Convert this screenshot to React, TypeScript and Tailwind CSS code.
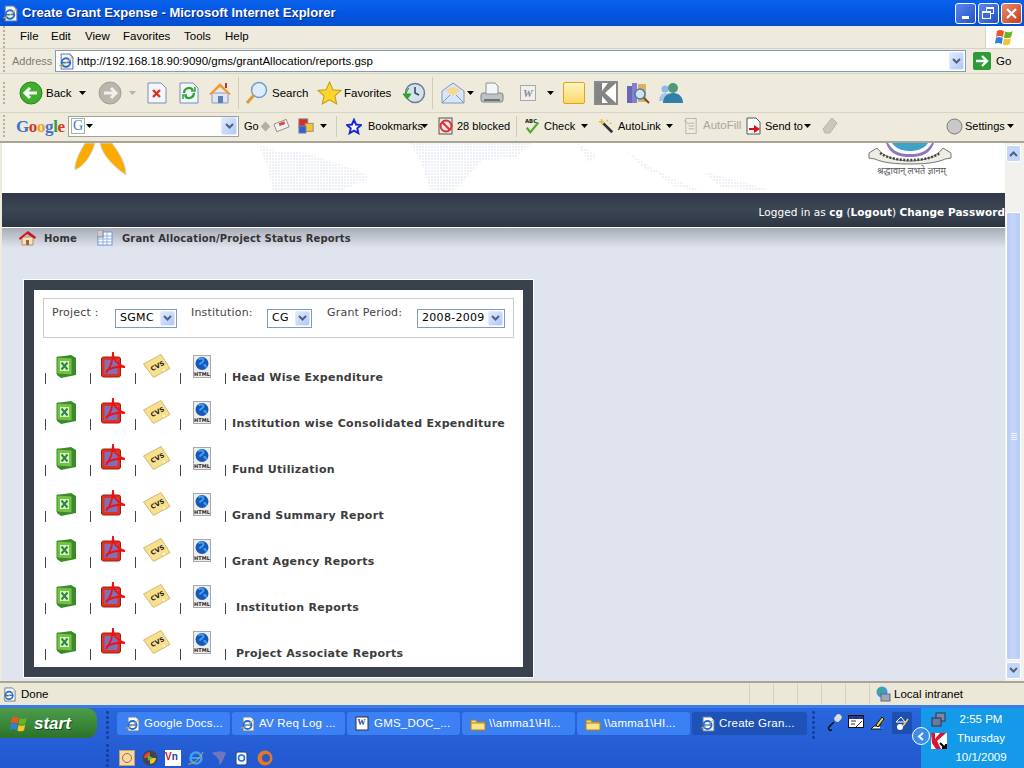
import { ReactNode } from "react";

const reports = [
  { name: "Head Wise Expenditure", gap: "ml-[6px]" },
  { name: "Institution wise Consolidated Expenditure", gap: "ml-[6px]" },
  { name: "Fund Utilization", gap: "ml-[6px]" },
  { name: "Grand Summary Report", gap: "ml-[6px]" },
  { name: "Grant Agency Reports", gap: "ml-[6px]" },
  { name: "Institution Reports", gap: "ml-[10px]" },
  { name: "Project Associate Reports", gap: "ml-[10px]" },
];

const Caret = ({ className = "" }: { className?: string }) => (
  <svg width="7" height="4" viewBox="0 0 7 4" className={`shrink-0 ${className}`}>
    <path d="M0 0h7L3.5 4z" fill="#000" />
  </svg>
);

const Chevron = ({ color = "#4d6185" }: { color?: string }) => (
  <svg width="9" height="7" viewBox="0 0 9 7">
    <path d="M1 1l3.5 3.5L8 1" fill="none" stroke={color} strokeWidth="2" />
  </svg>
);

const ComboArrow = ({ className = "" }: { className?: string }) => (
  <div className={`flex items-center justify-center rounded-[2px] border border-[#e3ebfb] bg-gradient-to-br from-[#e1eafe] to-[#aec8f7] ${className}`}>
    <Chevron />
  </div>
);

const Grip = () => (
  <div className="mx-[3px] flex h-full shrink-0 flex-col justify-center gap-[2px]">
    {[0, 1, 2, 3, 4, 5].map((i) => (
      <div key={i} className="h-[2px] w-[2px] bg-[#b5b19f]" />
    ))}
  </div>
);

const TaskGrip = () => (
  <div className="flex shrink-0 flex-col gap-[2px]">
    {[0, 1, 2, 3, 4, 5].map((i) => (
      <div key={i} className="h-[3px] w-[3px] rounded-[1px] bg-[#16409c]" />
    ))}
  </div>
);

const IePage = ({ size = 16 }: { size?: number }) => (
  <svg width={size} height={size} viewBox="0 0 16 16" className="shrink-0">
    <path d="M3 1h8l3 3v11H3z" fill="#f4f7fd" stroke="#6a7c99" />
    <circle cx="7.5" cy="9" r="4" fill="none" stroke="#1f6fd6" strokeWidth="1.8" />
    <path d="M4 9h7" stroke="#1f6fd6" strokeWidth="1.3" />
    <path d="M1 12c3 0 9-4 12-8" fill="none" stroke="#e0a83a" strokeWidth="1" />
  </svg>
);

const WinFlag = ({ size = 20 }: { size?: number }) => (
  <svg width={size} height={size} viewBox="0 0 20 20" className="shrink-0">
    <path d="M2 4c2-1.500 4-1.500 7 0l-1 6c-3-1.500-5-1.500-7 0z" fill="#e8562a" />
    <path d="M10 4.500c3 1.200 5 1 7.500-.5l-1.300 6c-2.500 1.500-4.500 1.700-7.200.5z" fill="#6ab42d" />
    <path d="M1 11c2-1.500 4-1.500 6.800 0l-1 6c-3-1.500-5-1.500-7 0z" fill="#2f7fe0" />
    <path d="M9 11.500c3 1.200 5 1 7-.5l-1.200 6c-2.500 1.500-4.500 1.700-7 .5z" fill="#f7c52b" />
  </svg>
);

function Excel() {
  return (
    <svg width="20" height="23" viewBox="0 0 20 23" className="block">
      <path d="M1 2l14-2 5 3v17l-15 3-4-3z" fill="#3a8a2c" />
      <path d="M1 2l15 1v17L1 19z" fill="#74c244" stroke="#3c8a2a" />
      <rect x="4" y="6" width="9" height="10" fill="#dcefc8" />
      <path d="M5.500 7.500l6 7M11.500 7.500l-6 7" stroke="#2a8a3c" strokeWidth="2" />
    </svg>
  );
}

function Pdf() {
  return (
    <svg width="24" height="26" viewBox="0 0 24 26" className="block">
      <rect x="0.500" y="5" width="19" height="20" rx="2" fill="#e1301f" stroke="#9c1f15" />
      <rect x="3.500" y="8" width="13" height="14" fill="#8070b8" />
      <path d="M12 0c0 9-3 16-7 21M12 0c0 8 3 11 12 15M5 19c5-3 11-5 19-4" fill="none" stroke="#ee1111" strokeWidth="1.800" />
    </svg>
  );
}

function Csv() {
  return (
    <svg width="28" height="24" viewBox="0 0 28 24" className="block">
      <path d="M0.500 10L18 0.500l9 14-16.500 9z" fill="#f8e08f" stroke="#cfb96f" />
      <text x="7.500" y="15" fontSize="6.500" fontWeight="700" fontFamily="'DejaVu Sans', sans-serif" fill="#222" transform="rotate(-27 13 13)">CVS</text>
      <circle cx="21" cy="16" r="1" fill="#fff" />
    </svg>
  );
}

function Html() {
  return (
    <svg width="18" height="23" viewBox="0 0 18 23" className="block">
      <rect x="0.500" y="0.500" width="17" height="22" fill="#eeeeee" stroke="#a8a8a8" />
      <circle cx="9" cy="8.500" r="6.500" fill="#1657b8" />
      <path d="M5.500 4.500c2-2 5-1 5 1s-3 2-4 4M10.500 10.500c2-1 3 0 2 2" fill="none" stroke="#3fa0ee" strokeWidth="2" />
      <text x="9" y="20.500" textAnchor="middle" fontSize="5" fontWeight="700" fontFamily="'DejaVu Sans', sans-serif" fill="#222">HTML</text>
    </svg>
  );
}

const IconCell = ({ children, width, pad }: { children: ReactNode; width: string; pad: string }) => (
  <div className={`flex items-end ${width}`}>
    <span className="mb-[1px] h-[11px] w-[1px] shrink-0 bg-[#444]" />
    <div className={`${pad} mb-[7px]`}>{children}</div>
  </div>
);

function ReportRow({ name, gap }: { name: string; gap: string }) {
  return (
    <div className="flex h-[46px] items-end pl-[2px]">
      <IconCell width="w-[45px]" pad="ml-[10px]"><Excel /></IconCell>
      <IconCell width="w-[45px]" pad="ml-[10px]"><Pdf /></IconCell>
      <IconCell width="w-[45px]" pad="ml-[7px]"><Csv /></IconCell>
      <IconCell width="w-[45px]" pad="ml-[12px]"><Html /></IconCell>
      <span className="mb-[1px] h-[11px] w-[1px] bg-[#444]" />
      <span className={`${gap} whitespace-nowrap text-[11px] font-bold leading-[14px] tracking-[0.3px] text-[#3c3c3c]`}>{name}</span>
    </div>
  );
}

const Select = ({ value, width, className = "" }: { value: string; width: string; className?: string }) => (
  <div className={`flex h-[19px] shrink-0 items-center justify-between border border-[#7f9db9] bg-white pl-[4px] pr-[1px] text-[11px] tracking-[0.3px] text-black ${width} ${className}`}>
    <span>{value}</span>
    <ComboArrow className="h-[15px] w-[15px]" />
  </div>
);

function ToolbarLabel({ children, className = "" }: { children: ReactNode; className?: string }) {
  return <span className={`shrink-0 whitespace-nowrap text-[11.5px] leading-none text-black ${className}`}>{children}</span>;
}

function BrowserChrome() {
  return (
    <>
      <div className="flex h-[26px] items-center bg-gradient-to-b from-[#0a62ea] via-[#0455e2] to-[#0250cf] pl-[2px] pr-[2px]">
        <IePage size={17} />
        <span className="ml-[3px] text-[13px] font-bold text-white [text-shadow:1px_1px_#0a2a80]">Create Grant Expense - Microsoft Internet Explorer</span>
        <div className="ml-auto flex gap-[2px]">
          <div className="flex h-[21px] w-[21px] items-end justify-center rounded-[3px] border border-white bg-gradient-to-br from-[#5c86ec] to-[#2450c8] pb-[4px]">
            <div className="h-[3px] w-[7px] bg-white" />
          </div>
          <div className="relative h-[21px] w-[21px] rounded-[3px] border border-white bg-gradient-to-br from-[#5c86ec] to-[#2450c8]">
            <div className="absolute left-[7px] top-[3px] h-[7px] w-[8px] border border-t-2 border-white" />
            <div className="absolute left-[3px] top-[7px] h-[8px] w-[9px] border border-t-2 border-white bg-[#3e69d9]" />
          </div>
          <div className="flex h-[21px] w-[21px] items-center justify-center rounded-[3px] border border-white bg-gradient-to-br from-[#e8896a] to-[#c43c16]">
            <svg width="11" height="11" viewBox="0 0 11 11"><path d="M1 1l9 9M10 1l-9 9" stroke="#fff" strokeWidth="2.200" /></svg>
          </div>
        </div>
      </div>

      <div className="flex h-[23px] items-center border-b border-[#d8d4c4] bg-[#eeebdd]">
        <Grip />
        <div className="ml-[12px] flex text-[11.5px] text-black">
          <span className="w-[31px]">File</span>
          <span className="w-[34px]">Edit</span>
          <span className="w-[38px]">View</span>
          <span className="w-[61px]">Favorites</span>
          <span className="w-[41px]">Tools</span>
          <span>Help</span>
        </div>
        <div className="ml-auto flex h-full w-[39px] items-center justify-center border-l border-[#d8d4c4] bg-white">
          <WinFlag />
        </div>
      </div>

      <div className="flex h-[25px] items-center border-b border-[#d8d4c4] bg-[#eeebdd]">
        <Grip />
        <span className="ml-[4px] mt-[1px] w-[39px] text-[11px] text-[#807d70]">Address</span>
        <div className="ml-[4px] flex h-[22px] w-[911px] items-center border border-[#7f9db9] bg-white pl-[2px] pr-[1px]">
          <IePage size={17} />
          <span className="ml-[2px] mt-[1px] text-[11.5px] text-black">http://192.168.18.90:9090/gms/grantAllocation/reports.gsp</span>
          <ComboArrow className="ml-auto h-[18px] w-[15px]" />
        </div>
        <div className="ml-[7px] flex h-[18px] w-[18px] items-center justify-center rounded-[2px] bg-[#2c9a35]">
          <svg width="14" height="12" viewBox="0 0 14 12"><path d="M1 6h11M7 1l5 5-5 5" fill="none" stroke="#fff" strokeWidth="2.400" /></svg>
        </div>
        <ToolbarLabel className="ml-[5px] mt-[1px]">Go</ToolbarLabel>
      </div>

      <div className="flex h-[39px] items-center border-b border-[#d8d4c4] bg-[#eeebdd]">
        <Grip />
        <svg width="24" height="24" viewBox="0 0 24 24" className="ml-[11px] shrink-0">
          <circle cx="12" cy="12" r="11" fill="#3fae2a" stroke="#2a8420" />
          <path d="M18 12H7M11 7l-5 5 5 5" fill="none" stroke="#fff" strokeWidth="3" />
        </svg>
        <ToolbarLabel className="ml-[3px] mt-[1px] w-[24px]">Back</ToolbarLabel>
        <Caret className="ml-[9px]" />
        <svg width="24" height="24" viewBox="0 0 24 24" className="ml-[12px] shrink-0">
          <circle cx="12" cy="12" r="11" fill="#b8b6ad" stroke="#a09e95" />
          <path d="M6 12h11M13 7l5 5-5 5" fill="none" stroke="#f2f1ea" strokeWidth="3" />
        </svg>
        <svg width="7" height="4" viewBox="0 0 7 4" className="ml-[7px] shrink-0"><path d="M0 0h7L3.500 4z" fill="#b5b3a8" /></svg>
        <svg width="20" height="22" viewBox="0 0 20 22" className="ml-[11px] shrink-0">
          <path d="M1 1h13l5 5v15H1z" fill="#f3f6fd" stroke="#7a8db5" />
          <path d="M6 8l7 7M13 8l-7 7" stroke="#e0301a" strokeWidth="2.400" />
        </svg>
        <svg width="20" height="22" viewBox="0 0 20 22" className="ml-[12px] shrink-0">
          <path d="M1 1h13l5 5v15H1z" fill="#f3f6fd" stroke="#7a8db5" />
          <path d="M5 11a5 5 0 0 1 9-3M15 11a5 5 0 0 1-9 3" fill="none" stroke="#2aa32f" strokeWidth="2.200" />
          <path d="M12 9h4V5M8 13H4v4" fill="none" stroke="#2aa32f" strokeWidth="1.500" />
        </svg>
        <svg width="24" height="24" viewBox="0 0 24 24" className="ml-[9px] shrink-0">
          <path d="M4 12v10h16V12z" fill="#dfe6f2" stroke="#8c9ab5" />
          <path d="M1 13L12 2l11 11-2 1-9-8-9 8z" fill="#f09a3c" />
          <rect x="10" y="15" width="5" height="7" fill="#5b7fb8" />
          <rect x="17" y="2" width="2" height="5" fill="#c0392b" />
        </svg>
        <div className="ml-[6px] h-[32px] w-[1px] shrink-0 bg-[#cfcbb9]" />
        <svg width="24" height="24" viewBox="0 0 24 24" className="ml-[6px] shrink-0">
          <circle cx="14" cy="9" r="7.500" fill="#dcecfb" stroke="#6f9fd0" strokeWidth="1.500" />
          <path d="M9 14L2 22" stroke="#d89a3b" strokeWidth="3" />
        </svg>
        <ToolbarLabel className="ml-[3px] mt-[1px] w-[34px]">Search</ToolbarLabel>
        <svg width="25" height="25" viewBox="0 0 24 24" className="ml-[11px] shrink-0">
          <path d="M12 1l3.300 7.300 7.700.8-5.800 5.200 1.700 7.700L12 18l-6.900 4 1.700-7.700L1 9.100l7.700-.8z" fill="#fcd62c" stroke="#c79a14" />
        </svg>
        <ToolbarLabel className="ml-[2px] mt-[1px] w-[47px]">Favorites</ToolbarLabel>
        <svg width="24" height="24" viewBox="0 0 24 24" className="ml-[11px] shrink-0">
          <circle cx="13" cy="12" r="9.500" fill="#d5e2ee" stroke="#6b7d90" strokeWidth="1.500" />
          <path d="M13 6v6l4 2" stroke="#345" strokeWidth="1.500" fill="none" />
          <path d="M1 13h8l-4 5zM4 13a9 9 0 0 1 3-6" fill="#2fa02c" stroke="#2fa02c" />
        </svg>
        <div className="ml-[6px] h-[32px] w-[1px] shrink-0 bg-[#cfcbb9]" />
        <svg width="24" height="22" viewBox="0 0 24 22" className="ml-[8px] shrink-0">
          <path d="M1 9l11-8 11 8v12H1z" fill="#d9e5f8" stroke="#7e95c6" />
          <path d="M5 9c3-5 11-5 14 0l-7 5z" fill="#f6d88e" />
          <path d="M1 21l8-8M23 21l-8-8" stroke="#7e95c6" />
        </svg>
        <Caret className="ml-[2px]" />
        <svg width="24" height="24" viewBox="0 0 24 24" className="ml-[6px] shrink-0">
          <rect x="1" y="12" width="22" height="9" rx="2" fill="#bfc3c6" stroke="#7d8286" />
          <path d="M6 2h9l3 3v8H6z" fill="#f4f6f8" stroke="#8a8f93" />
          <rect x="4" y="18" width="16" height="2" fill="#6d7276" />
        </svg>
        <svg width="20" height="20" viewBox="0 0 20 20" className="ml-[14px] shrink-0">
          <rect x="2.500" y="2.500" width="15" height="15" fill="#efefef" stroke="#a9a9a9" />
          <text x="10" y="14" textAnchor="middle" fontSize="11" fontStyle="italic" fontWeight="700" fontFamily="'Liberation Serif', serif" fill="#8a8a8a">W</text>
        </svg>
        <Caret className="ml-[9px]" />
        <div className="ml-[9px] h-[22px] w-[22px] shrink-0 rounded-[2px] border border-[#d9a520] bg-gradient-to-b from-[#fdf3bd] to-[#fdd866]" />
        <div className="ml-[9px] flex h-[24px] w-[24px] shrink-0 items-center justify-center border-2 border-[#8a8a8a] bg-white">
          <svg width="20" height="20" viewBox="0 0 20 20"><path d="M0 0h6v8l6-8h8L9 10l11 10h-8L6 13v7H0z" fill="#848484" /></svg>
        </div>
        <svg width="24" height="24" viewBox="0 0 24 24" className="ml-[8px] shrink-0">
          <rect x="1" y="5" width="5" height="17" fill="#6a66b8" />
          <rect x="6" y="2" width="5" height="20" fill="#8680cc" />
          <rect x="12" y="3" width="8" height="18" fill="#d8b55c" />
          <circle cx="14" cy="13" r="5" fill="#cfe3f5" stroke="#4b7aa8" strokeWidth="1.500" />
          <path d="M18 17l5 5" stroke="#7a4a1a" strokeWidth="2" />
        </svg>
        <svg width="26" height="22" viewBox="0 0 26 22" className="ml-[8px] shrink-0">
          <circle cx="7" cy="7" r="3.500" fill="#8db9e8" />
          <path d="M1 19c0-5 3-8 6-8s6 3 6 8z" fill="#a7c7ec" />
          <circle cx="15" cy="6" r="5" fill="#4b9a7a" />
          <path d="M5 21c0-6 4-10 10-10s10 4 10 10z" fill="#2f7fa8" />
        </svg>
      </div>

      <div className="flex h-[30px] items-center border-b-2 border-[#a8a594] bg-[#eeebdd] pb-[2px]">
        <Grip />
        <span className="ml-[8px] w-[48px] shrink-0 font-['Liberation_Serif',serif] text-[17px] font-bold leading-none tracking-[-0.4px]">
          <span className="text-[#3f6fd8]">G</span>
          <span className="text-[#d8382c]">o</span>
          <span className="text-[#e6a91c]">o</span>
          <span className="text-[#3f6fd8]">g</span>
          <span className="text-[#3c9a3c]">l</span>
          <span className="text-[#d8382c]">e</span>
        </span>
        <div className="ml-[4px] flex h-[21px] w-[171px] shrink-0 items-center border border-[#a0a0a0] bg-white pl-[2px] pr-[1px]">
          <span className="border border-[#9cb9a0] px-[1px] font-['Liberation_Serif',serif] text-[14px] leading-[14px] text-[#3f6fd8]">G</span>
          <Caret className="ml-[1px]" />
          <ComboArrow className="ml-auto h-[18px] w-[16px]" />
        </div>
        <ToolbarLabel className="ml-[5px] w-[12px] text-[11px]">Go</ToolbarLabel>
        <div className="ml-[6px] h-[7px] w-[7px] shrink-0 rotate-45 bg-[#b5b19f]" />
        <svg width="17" height="16" viewBox="0 0 18 16" className="ml-[4px] shrink-0">
          <path d="M1 6l13-5 3 8-13 5z" fill="#f3f3f3" stroke="#8a8a8a" />
          <path d="M6 5l6-2 1 3-6 2z" fill="#d9483b" />
        </svg>
        <svg width="16" height="18" viewBox="0 0 18 18" className="ml-[8px] shrink-0">
          <rect x="1" y="1" width="10" height="9" fill="#d92c2c" stroke="#888" />
          <rect x="8" y="6" width="9" height="9" fill="#f2c92c" stroke="#888" />
          <rect x="1" y="9" width="8" height="8" fill="#2c62d9" stroke="#888" />
        </svg>
        <Caret className="ml-[6px]" />
        <div className="ml-[9px] h-[21px] w-[1px] shrink-0 bg-[#cfcbb9]" />
        <svg width="16" height="17" viewBox="0 0 24 24" className="ml-[9px] shrink-0">
          <path d="M12 2l3 7 7.500.8-5.600 5 1.600 7.200L12 18.300 5.500 22l1.600-7.200-5.600-5L9 9z" fill="#fff" stroke="#1a26d8" strokeWidth="3" />
        </svg>
        <ToolbarLabel className="ml-[6px] w-[51px] text-[11px]">Bookmarks</ToolbarLabel>
        <Caret className="ml-[2px]" />
        <svg width="16" height="18" viewBox="0 0 16 18" className="ml-[10px] shrink-0">
          <rect x="1" y="1" width="13" height="16" fill="#e8e8e8" stroke="#555" />
          <circle cx="8" cy="9" r="5.500" fill="none" stroke="#e03030" strokeWidth="2" />
          <path d="M4 5l8 8" stroke="#e03030" strokeWidth="2" />
        </svg>
        <ToolbarLabel className="ml-[3px] w-[51px] text-[11px]">28 blocked</ToolbarLabel>
        <div className="ml-[8px] h-[21px] w-[1px] shrink-0 bg-[#cfcbb9]" />
        <svg width="16" height="18" viewBox="0 0 18 18" className="ml-[8px] shrink-0">
          <text x="0" y="6" fontSize="6" fontWeight="700" fontFamily="'DejaVu Sans', sans-serif" fill="#222">ABC</text>
          <path d="M2 11l4 5 9-11" fill="none" stroke="#5aa832" strokeWidth="2.500" />
        </svg>
        <ToolbarLabel className="ml-[3px] w-[30px] text-[11px]">Check</ToolbarLabel>
        <Caret className="ml-[7px]" />
        <svg width="16" height="18" viewBox="0 0 18 18" className="ml-[10px] shrink-0">
          <path d="M6 6l10 10" stroke="#333" strokeWidth="3" />
          <path d="M4 1v6M1 4h6M10 2l1 2M13 6l2 0" stroke="#e8b92c" strokeWidth="1.500" />
        </svg>
        <ToolbarLabel className="ml-[4px] w-[41px] text-[11px]">AutoLink</ToolbarLabel>
        <Caret className="ml-[7px]" />
        <svg width="16" height="18" viewBox="0 0 17 18" className="ml-[10px] shrink-0">
          <path d="M3 1h11v16H3z" fill="#efece0" stroke="#b5b3a8" />
          <path d="M1 3l5 4M6 6h6M6 9h6M6 12h6" stroke="#b5b3a8" />
        </svg>
        <ToolbarLabel className="ml-[4px] w-[35px] text-[10.5px] !text-[#a9a79b]">AutoFill</ToolbarLabel>
        <svg width="16" height="18" viewBox="0 0 16 18" className="ml-[8px] shrink-0">
          <path d="M1 1h9l4 4v12H1z" fill="#fafafa" stroke="#555" />
          <path d="M3 11h5V8l6 4-6 4v-3H3z" fill="#e01010" />
        </svg>
        <ToolbarLabel className="ml-[3px] w-[37px] text-[11px]">Send to</ToolbarLabel>
        <Caret className="ml-[2px]" />
        <svg width="16" height="18" viewBox="0 0 16 18" className="ml-[11px] shrink-0">
          <path d="M1 12L10 1l5 5-7 10H3z" fill="#cbc8ba" stroke="#b5b3a8" />
        </svg>
        <svg width="17" height="17" viewBox="0 0 17 17" className="ml-auto shrink-0">
          <circle cx="8.500" cy="8.500" r="7.500" fill="#c8c8c8" stroke="#7a7a7a" />
        </svg>
        <ToolbarLabel className="ml-[2px] w-[40px] text-[11px]">Settings</ToolbarLabel>
        <Caret className="ml-[2px] mr-[10px]" />
      </div>
    </>
  );
}

function Banner() {
  return (
    <div className="relative h-[50px] shrink-0 overflow-hidden bg-white">
      {/* the banner is an image on the real page: faded world map, petals and crest */}
      <svg width="1003" height="50" viewBox="0 0 1003 50" className="block">
        <defs>
          <pattern id="dots" width="3" height="3" patternUnits="userSpaceOnUse">
            <rect width="2" height="2" fill="#eef0f7" />
          </pattern>
        </defs>
        <path d="M255 0l18 8 22 0 40 12 32 12-3 5-24 10h-70l-4-22z" fill="url(#dots)" />
        <path d="M408 0h122l-15 14-35 4-18 20-10 10h-24l-8-28z" fill="url(#dots)" />
        <path d="M575 0l20 12-8 8zM620 5l30 20 10 5-15-2zM650 25l25 12 25 12-30-6z" fill="url(#dots)" />
        <path d="M700 28l30 8 40 12-50-3z" fill="url(#dots)" />
        <path d="M83 0C77 10 72 20 73 27 82 23 90 12 93 0z" fill="#fbab00" stroke="#d8d8d8" />
        <path d="M98 0c2 12 14 24 26 32C124 20 116 8 110 0z" fill="#fbab00" stroke="#d8d8d8" />
        <path d="M890 0c4 7 14 8 18 8s14-1 18-8z" fill="#3fa3c8" />
        <path d="M886 0c6 10 14 11 22 11s16-1 22-11l2 0c-4 12-14 14-24 14S888 12 884 0z" fill="#8b78c0" />
        <path d="M875 5c6 9 20 13 33 13s27-4 33-13l8 5v5l-6 1c-8 4-22 5-35 5s-27-1-35-5l-6-1v-5z" fill="#efece4" stroke="#555" strokeWidth="0.800" />
        <path d="M878 10c7 5 18 7 30 7s23-2 30-7" fill="none" stroke="#444" strokeWidth="2.500" strokeDasharray="2 1.500" />
      </svg>
      <span className="absolute left-[875px] top-[21px] whitespace-nowrap font-['Noto_Sans','DejaVu_Sans',sans-serif] text-[9px] leading-[14px] text-[#555]">श्रद्धावान् लभते ज्ञानम्</span>
    </div>
  );
}

function PageBody() {
  return (
    <div className="flex min-w-0 flex-1 flex-col overflow-hidden bg-[#e0e4ee] font-['DejaVu_Sans',sans-serif]">
      <Banner />
      <div className="flex h-[35px] shrink-0 items-center justify-end border-b border-white bg-gradient-to-b from-[#303847] via-[#3c4653] to-[#2d3543] pt-[5px] text-[10.5px] tracking-[0.05px] text-white">
        <span>Logged in as <b>cg</b> (<b>Logout</b>) <b>Change Password</b></span>
      </div>
      <div className="h-[20px] shrink-0 bg-gradient-to-b from-[#a9adb7] to-[#e0e4ee]">
        <div className="flex items-center pl-[17px] pt-[2px] text-[10px] font-bold tracking-[0.15px] text-[#333]">
          <svg width="17" height="16" viewBox="0 0 17 16" className="shrink-0">
            <path d="M3 7v8h11V7z" fill="#f0e2c2" stroke="#b9905a" />
            <path d="M0 8l9-7 8 6-1 2-8-5-7 6z" fill="#d3101c" />
            <rect x="7" y="10" width="3" height="5" fill="#a0662a" />
          </svg>
          <span className="ml-[8px] w-[32px]">Home</span>
          <svg width="16" height="16" viewBox="0 0 16 16" className="ml-[21px] shrink-0">
            <rect x="1" y="2" width="14" height="13" fill="#fff" stroke="#6c95d4" />
            <path d="M1 6h14M1 9h14M1 12h14M6 2v13M10 2v13" stroke="#8fb0e0" />
            <rect x="0" y="0" width="6" height="7" fill="#ccc" stroke="#888" />
          </svg>
          <span className="ml-[9px]">Grant Allocation/Project Status Reports</span>
        </div>
      </div>
      <div className="ml-[21px] mt-[31px] w-[511px] border border-white bg-[#39424c] p-[10px]">
        <div className="h-[377px] bg-white px-[9px] pt-[8px]">
          <div className="flex h-[40px] w-[471px] items-start border border-[#c9cdce] pl-[8px] pt-[6px] text-[11px] tracking-[0.2px] text-[#444]">
            <span className="w-[48px] shrink-0 whitespace-nowrap">Project :</span>
            <Select value="SGMC" width="w-[62px]" className="ml-[15px] mt-[4px]" />
            <span className="ml-[14px] w-[61px] shrink-0 whitespace-nowrap">Institution:</span>
            <Select value="CG" width="w-[45px]" className="ml-[15px] mt-[4px]" />
            <span className="ml-[15px] w-[75px] shrink-0 whitespace-nowrap">Grant Period:</span>
            <Select value="2008-2009" width="w-[88px]" className="ml-[15px] mt-[4px]" />
          </div>
          <div className="mt-[1px]">
            {reports.map((r) => (
              <ReportRow key={r.name} name={r.name} gap={r.gap} />
            ))}
          </div>
        </div>
      </div>
    </div>
  );
}

const ScrollButton = ({ up }: { up?: boolean }) => (
  <div className="flex h-[17px] w-[15px] items-center justify-center rounded-[2px] border border-white bg-[#c5d6fb]">
    <svg width="9" height="7" viewBox="0 0 9 7" className={up ? "rotate-180" : ""}>
      <path d="M1 1l3.500 3.500L8 1" fill="none" stroke="#4d6185" strokeWidth="2" />
    </svg>
  </div>
);

function Scrollbar() {
  return (
    <div className="flex w-[19px] shrink-0 flex-col items-center bg-[#f3f1ec] py-[2px] pr-[2px]">
      <ScrollButton up />
      <div className="mt-[50px] flex min-h-0 w-[15px] flex-1 items-center justify-center rounded-[2px] border border-white bg-gradient-to-r from-[#b8ccf7] via-[#c5d6fb] to-[#b6caf6]">
        <div className="flex flex-col gap-[1px]">
          {[0, 1, 2, 3].map((i) => <div key={i} className="h-[1px] w-[6px] bg-[#eef3fe]" />)}
        </div>
      </div>
      <div className="mt-[2px]"><ScrollButton /></div>
    </div>
  );
}

function StatusBar() {
  return (
    <div className="flex h-[24px] shrink-0 items-center border-t-2 border-[#a8a594] bg-[#ebe8d8] pl-[2px] text-[11.5px] text-black">
      <IePage size={15} />
      <span className="ml-[4px] mt-[1px]">Done</span>
      <div className="ml-auto flex h-full items-stretch py-[1px]">
        {[0, 1, 2, 3, 4].map((i) => (
          <div key={i} className="w-[24px] border-l border-[#d3d0c0]" />
        ))}
        <div className="flex w-[155px] items-center border-l border-[#d3d0c0] pl-[5px]">
          <svg width="16" height="16" viewBox="0 0 16 16">
            <circle cx="7" cy="6" r="5.500" fill="#3d9ad8" />
            <path d="M4 3c2-1 4 0 3 2s-3 1-3 3" fill="#4cae4c" />
            <rect x="6" y="8" width="9" height="7" fill="#9aa8b8" stroke="#667" />
          </svg>
          <span className="ml-[3px] mt-[1px]">Local intranet</span>
        </div>
      </div>
    </div>
  );
}

function TaskButton({ icon, label, active, width }: { icon: ReactNode; label: string; active?: boolean; width: string }) {
  return (
    <div className={`flex h-[23px] items-center rounded-[3px] pl-[8px] text-[11.5px] tracking-[0.2px] text-white ${width} ${active ? "bg-[#1e52b7]" : "bg-[#3c81f3]"}`}>
      {icon}
      <span className="ml-[3px] truncate">{label}</span>
    </div>
  );
}

const Folder = () => (
  <svg width="16" height="14" viewBox="0 0 16 14">
    <path d="M1 3h5l1 2h8v8H1z" fill="#f7d66e" stroke="#a5822a" />
    <path d="M1 6h14v7H1z" fill="#fbe28e" stroke="#a5822a" />
  </svg>
);

function Taskbar() {
  return (
    <div className="flex h-[63px] shrink-0 border-t-[3px] border-[#3a7de6] bg-gradient-to-b from-[#2a66dc] to-[#2258d0] text-white">
      <div className="min-w-0 flex-1">
        <div className="flex h-[31px] items-start">
          <div className="flex h-[30px] w-[97px] shrink-0 items-center rounded-r-[10px] bg-gradient-to-b from-[#4d9a4d] via-[#3a8a3a] to-[#2c702c] pl-[10px]">
            <WinFlag size={19} />
            <span className="ml-[5px] text-[17px] font-bold italic leading-none [text-shadow:1px_1px_#1c4a1c]">start</span>
          </div>
          <div className="ml-[9px] mt-[3px]"><TaskGrip /></div>
          <div className="ml-[8px] mt-[4px] flex gap-[2px]">
            <TaskButton icon={<IePage />} label="Google Docs..." width="w-[113px]" />
            <TaskButton icon={<IePage />} label="AV Req Log ..." width="w-[113px]" />
            <TaskButton
              icon={
                <svg width="16" height="16" viewBox="0 0 16 16">
                  <rect x="1" y="1" width="12" height="13" fill="#fff" stroke="#333" />
                  <text x="2.500" y="9" fontSize="8" fontWeight="700" fontFamily="'Liberation Serif', serif" fill="#1a3da8">W</text>
                </svg>
              }
              label="GMS_DOC_..."
              width="w-[113px]"
            />
            <TaskButton icon={<Folder />} label="\\amma1\HI..." width="w-[113px]" />
            <TaskButton icon={<Folder />} label="\\amma1\HI..." width="w-[113px]" />
            <TaskButton icon={<IePage />} label="Create Gran..." active width="w-[115px]" />
          </div>
          <div className="ml-[5px] mt-[3px]"><TaskGrip /></div>
          <div className="ml-[11px] mt-[4px] flex items-center gap-[6px]">
            <svg width="16" height="20" viewBox="0 0 16 20">
              <rect x="9" y="1" width="6" height="8" rx="3" fill="#ddd" transform="rotate(40 12 5)" />
              <path d="M8 9L3 14c-1 2 0 4 3 3" fill="none" stroke="#111" strokeWidth="1.500" />
            </svg>
            <svg width="16" height="16" viewBox="0 0 16 16">
              <rect x="0.500" y="0.500" width="15" height="12" fill="#fff" stroke="#111" />
              <rect x="1" y="1" width="14" height="3" fill="#22388e" />
              <path d="M3 6h5M3 9h4M8 12l6-6" stroke="#333" />
            </svg>
            <svg width="16" height="16" viewBox="0 0 16 16">
              <path d="M1 14h11v-3H4z" fill="#fff" stroke="#111" />
              <path d="M6 10l6-8 2 2-6 8z" fill="#f4d03f" stroke="#111" />
              <rect x="10" y="11" width="4" height="3" fill="#2a6fd6" />
            </svg>
            <div className="flex h-[22px] w-[20px] items-center justify-center rounded-[2px] bg-[#1e4fb0]">
              <svg width="16" height="16" viewBox="0 0 16 16">
                <path d="M2 7l5-5 4 5z" fill="none" stroke="#fff" />
                <circle cx="6" cy="12" r="3" fill="#fff" />
                <path d="M9 11l5-7" stroke="#f4d03f" strokeWidth="1.500" />
              </svg>
            </div>
          </div>
        </div>
        <div className="mt-[5px] flex items-center">
          <div className="ml-[106px]"><TaskGrip /></div>
          <div className="ml-[10px] flex items-center gap-[7px]">
            <div className="flex h-[16px] w-[16px] items-center justify-center border border-[#caa060] bg-[#f5d9a8]">
              <div className="h-[10px] w-[10px] rounded-full border border-[#b86a1a]" />
            </div>
            <svg width="16" height="16" viewBox="0 0 16 16">
              <circle cx="8" cy="8" r="7.500" fill="#444" />
              <path d="M2 8a6 6 0 0 1 6-6l0 6z" fill="#e8452c" />
              <path d="M8 14a6 6 0 0 0 6-6l-6 0z" fill="#f4c430" />
              <path d="M6 5l5 3-5 3z" fill="#5cb85c" />
            </svg>
            <div className="flex h-[16px] w-[16px] items-start bg-white text-[10px] font-bold leading-[14px]">
              <span className="text-[#d01a1a]">V</span><span className="text-[#1a3da8]">n</span>
            </div>
            <svg width="16" height="16" viewBox="0 0 16 16">
              <circle cx="8" cy="8" r="5.500" fill="none" stroke="#3fa1ea" strokeWidth="2.500" />
              <path d="M3 8h10" stroke="#3fa1ea" strokeWidth="2" />
              <path d="M0 14c4 1 12-5 15-12" fill="none" stroke="#d9a53a" />
            </svg>
            <svg width="16" height="16" viewBox="0 0 16 16">
              <path d="M1 3c5-2 11-2 14 0-2 4-3 10-7 12 1-4 0-7-7-12z" fill="#6f78bd" />
            </svg>
            <svg width="16" height="16" viewBox="0 0 16 16">
              <rect x="2" y="2" width="11" height="13" rx="2" fill="#f4f7fd" stroke="#2c3e70" />
              <circle cx="7.500" cy="8" r="3" fill="none" stroke="#1f6fd6" strokeWidth="1.500" />
            </svg>
            <svg width="16" height="16" viewBox="0 0 16 16">
              <circle cx="8" cy="8" r="7.500" fill="#e8762a" />
              <circle cx="9" cy="8" r="4" fill="#2c5cb8" />
            </svg>
          </div>
        </div>
      </div>
      <div className="relative flex w-[103px] shrink-0 bg-[#149ae8]">
        <div className="absolute -left-[9px] top-[19px] flex h-[18px] w-[18px] items-center justify-center rounded-full border border-white bg-[#3c8cf0]">
          <svg width="8" height="9" viewBox="0 0 8 9"><path d="M6 1L2 4.500 6 8" fill="none" stroke="#fff" strokeWidth="2" /></svg>
        </div>
        <div className="ml-[10px] flex w-[16px] flex-col gap-[5px] pt-[4px]">
          <svg width="16" height="16" viewBox="0 0 16 16">
            <rect x="5" y="1" width="9" height="8" fill="#7a88a8" stroke="#334" />
            <rect x="1" y="6" width="9" height="8" fill="#6b78a0" stroke="#334" />
          </svg>
          <svg width="16" height="16" viewBox="0 0 16 16">
            <rect width="16" height="16" fill="#fff" />
            <path d="M0 0h4v6l5-6h6L6 8l4 8H5L1 10z" fill="#e01030" />
            <path d="M9 10l5 5M11 15h4v-4" stroke="#000" strokeWidth="2" />
          </svg>
        </div>
        <div className="flex flex-1 flex-col items-center pr-[9px] pt-[2px] text-[11.5px] leading-[19px]">
          <span>2:55 PM</span>
          <span>Thursday</span>
          <span>10/1/2009</span>
        </div>
      </div>
    </div>
  );
}

export default function App() {
  return (
    <div className="flex h-[768px] w-[1024px] flex-col overflow-hidden bg-[#eeebdd] font-['Liberation_Sans',sans-serif]">
      <BrowserChrome />
      <div className="flex min-h-0 flex-1 pl-[2px]">
        <PageBody />
        <Scrollbar />
      </div>
      <StatusBar />
      <Taskbar />
    </div>
  );
}
